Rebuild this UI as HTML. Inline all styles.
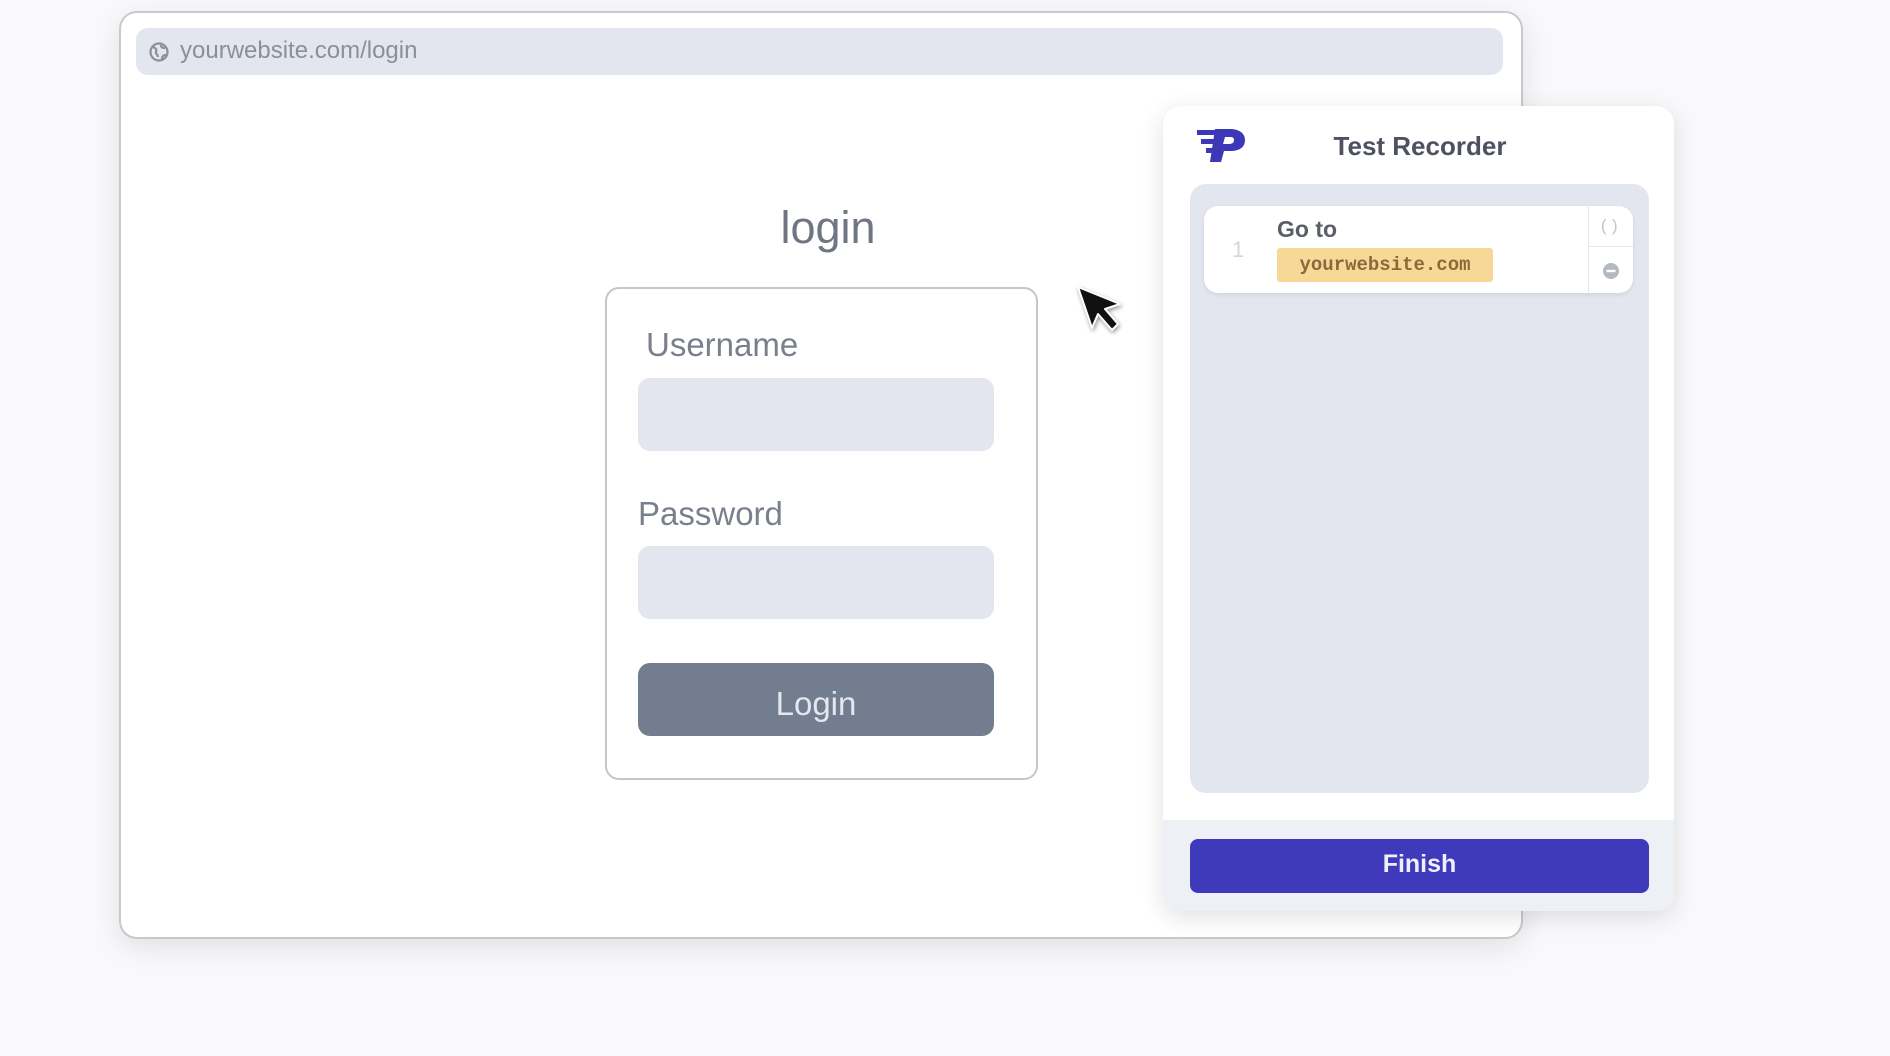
<!DOCTYPE html>
<html><head><meta charset="utf-8"><style>
*{margin:0;padding:0;box-sizing:border-box}
body{width:1890px;height:1056px;background:#f9f9fb;position:relative;overflow:hidden;font-family:"Liberation Sans",sans-serif}
.abs{position:absolute}
</style></head><body>
<div class="abs" style="left:119px;top:11px;width:1404px;height:928px;background:#fff;border:2px solid #c9c9cc;border-radius:18px;box-shadow:0 8px 28px rgba(0,0,0,0.10)"></div>
<div class="abs" style="left:136px;top:28px;width:1367px;height:47px;background:#e3e6ef;border-radius:12px"></div>
<svg class="abs" style="left:148px;top:41px" width="22" height="22" viewBox="0 0 22 22"><circle cx="11" cy="11" r="8.5" fill="none" stroke="#8a8f9c" stroke-width="2.2"/><path d="M5 6c3 1 4 3 3 5s2 2 2 5M13 4c0 3 2 3 4 3M14 18c0-3 2-4 4-4" fill="none" stroke="#8a8f9c" stroke-width="2.2"/></svg>
<div class="abs" style="left:180px;top:37px;font-size:24px;color:#8a8f9c;line-height:28px">yourwebsite.com/login</div>

<div class="abs" style="left:700px;top:200px;width:256px;text-align:center;font-size:45px;color:#6f7583;line-height:56px">login</div>
<div class="abs" style="left:605px;top:287px;width:433px;height:493px;border:2px solid #c6c6c9;border-radius:14px;background:#fff"></div>
<div class="abs" style="left:646px;top:325px;font-size:33px;color:#7a7f8c;line-height:40px">Username</div>
<div class="abs" style="left:638px;top:378px;width:356px;height:73px;background:#e3e6ef;border-radius:12px"></div>
<div class="abs" style="left:638px;top:494px;font-size:33px;color:#7a7f8c;line-height:40px">Password</div>
<div class="abs" style="left:638px;top:546px;width:356px;height:73px;background:#e3e6ef;border-radius:12px"></div>
<div class="abs" style="left:638px;top:663px;width:356px;height:73px;background:#737d90;border-radius:12px;color:#e4e7ee;font-size:33px;text-align:center;line-height:82px">Login</div>

<svg class="abs" style="left:1070px;top:280px" width="60" height="65" viewBox="0 0 60 65"><path d="M8 7 L22 48 L28 34 L42 50 L48 44 L35 29 L50 24 Z" fill="#111" stroke="#fff" stroke-width="2" stroke-linejoin="round" style="filter:drop-shadow(1px 2px 2px rgba(0,0,0,0.4))"/></svg>

<div class="abs" style="left:1163px;top:106px;width:511px;height:805px;background:#fff;border-radius:18px;box-shadow:0 6px 24px rgba(0,0,0,0.12);overflow:hidden">
  <div class="abs" style="left:0;top:714px;width:511px;height:91px;background:#edf0f5"></div>
</div>
<svg class="abs" style="left:1196px;top:127px" width="50" height="37" viewBox="0 0 50 37"><path d="M19 2 H34 C44 2 49 7 49 13 C49 20 44 24 34 24 H28 L25 35 H14 Z M29 10 L27 17 H33 C37 17 38 15 38 13 C38 11 37 10 34 10 Z" fill="#3d38b8" fill-rule="evenodd"/><rect x="1" y="3" width="18" height="5" fill="#3d38b8"/><rect x="5" y="12" width="14" height="5" fill="#3d38b8"/><rect x="10" y="21" width="9" height="5" fill="#3d38b8"/></svg>
<div class="abs" style="left:1300px;top:130px;width:240px;text-align:center;font-size:26px;font-weight:bold;color:#4e5260;line-height:32px">Test Recorder</div>
<div class="abs" style="left:1190px;top:184px;width:459px;height:609px;background:#e3e6ef;border-radius:16px"></div>
<div class="abs" style="left:1204px;top:206px;width:429px;height:87px;background:#fff;border-radius:14px;box-shadow:0 2px 5px rgba(0,0,0,0.08)"></div>
<div class="abs" style="left:1588px;top:206px;width:1px;height:87px;background:#e6e8ee"></div>
<div class="abs" style="left:1589px;top:246px;width:44px;height:1px;background:#e6e8ee"></div>
<div class="abs" style="left:1232px;top:237px;font-size:22px;color:#d4d6dc;line-height:26px">1</div>
<div class="abs" style="left:1277px;top:215px;font-size:23px;font-weight:bold;color:#5a5e6a;line-height:28px">Go to</div>
<div class="abs" style="left:1277px;top:248px;width:216px;height:34px;background:#f8d897;border-radius:3px;font-family:'Liberation Mono',monospace;font-size:19px;font-weight:bold;color:#8a6a3a;text-align:center;line-height:34px">yourwebsite.com</div>
<div class="abs" style="left:1599px;top:217px;font-size:17px;color:#c3c6cf;line-height:22px;font-family:'Liberation Mono',monospace">()</div>
<svg class="abs" style="left:1602px;top:262px" width="18" height="18" viewBox="0 0 18 18"><circle cx="9" cy="9" r="8" fill="#b4b8c2"/><rect x="4.5" y="7.8" width="9" height="2.4" fill="#fff"/></svg>
<div class="abs" style="left:1190px;top:839px;width:459px;height:54px;background:#3e3abb;border-radius:8px;color:#eef0fb;font-size:25px;font-weight:bold;text-align:center;line-height:50px">Finish</div>
</body></html>
